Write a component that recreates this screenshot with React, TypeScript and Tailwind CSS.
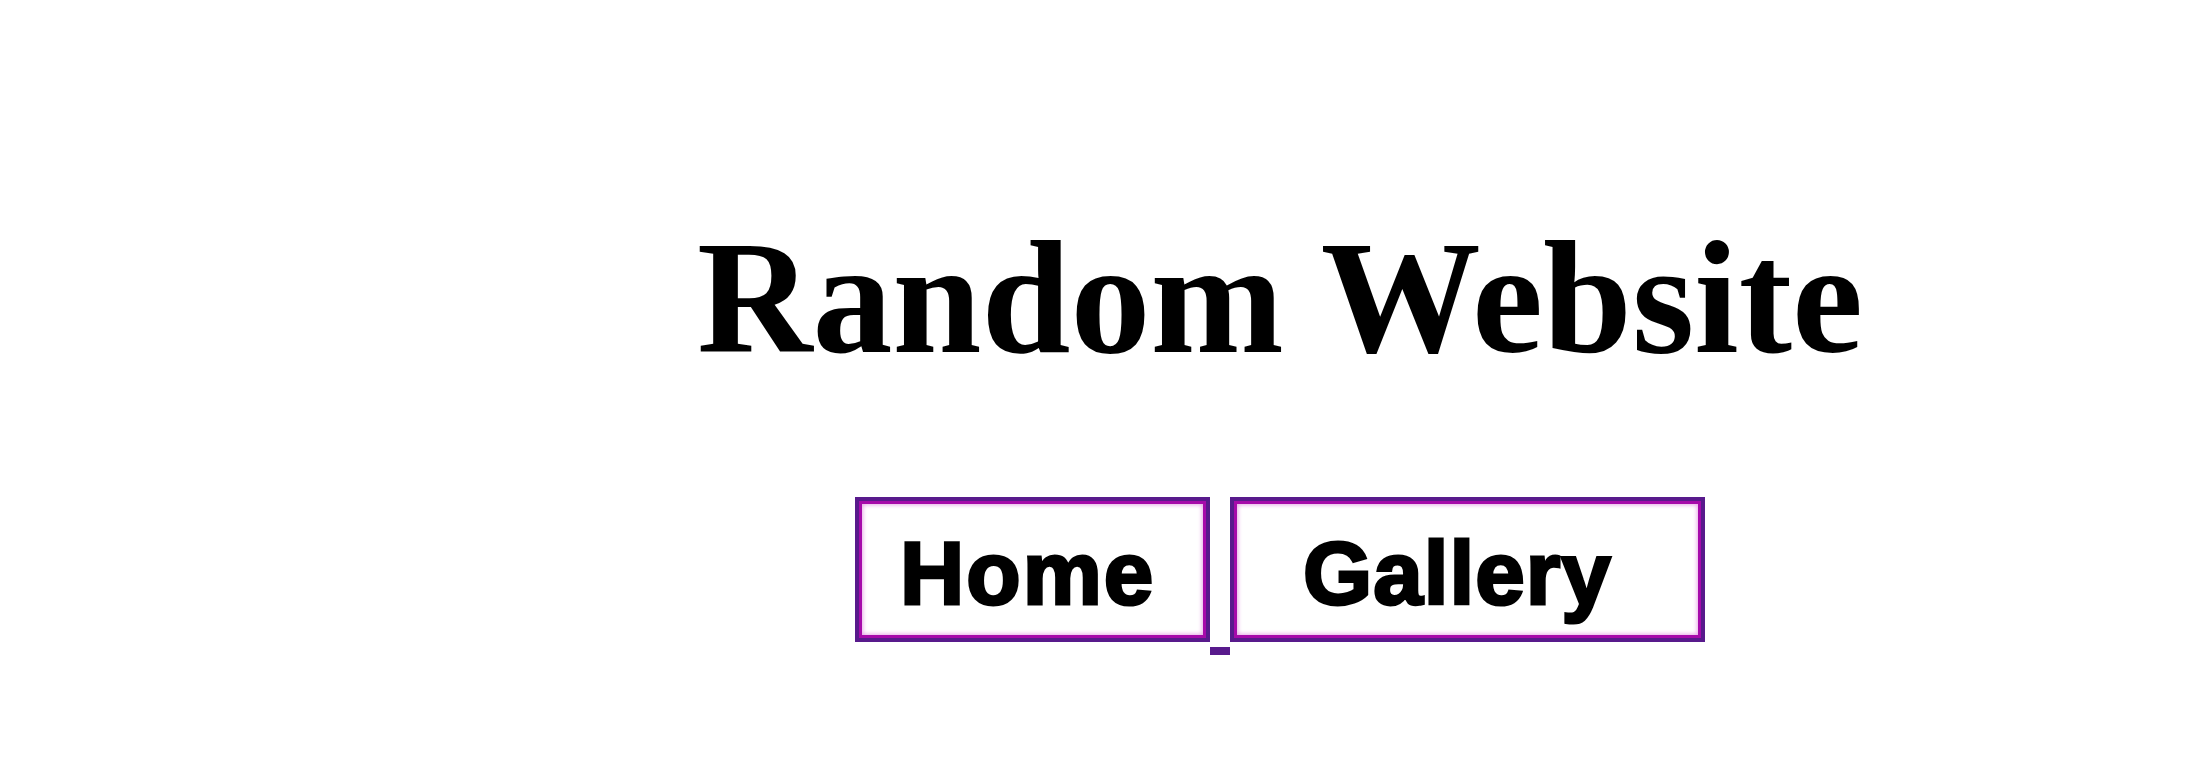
export default function App() {
  return (
    <div className="w-[2208px] h-[764px] bg-white pl-[352px] overflow-hidden">
      <div className="flex flex-col items-center">
        <h1
          className="mt-[218px] h-[160px] leading-[160px] text-[160px] font-bold text-black whitespace-nowrap"
          style={{ fontFamily: '"Liberation Serif", "Times New Roman", serif' }}
        >
          Random Website
        </h1>
        <div className="mt-[119px] flex items-start">
          <a className="block w-[355px] h-[145px] border-4 border-[#581a8c]">
            <div className="w-full h-full border-[3px] border-[#a60aaa] bg-white shadow-[inset_0_0_4px_1px_#e6a6e6]">
              <div
                className="pt-[25px] pl-[38px] text-[89px] leading-none font-bold text-black tracking-[2px] [-webkit-text-stroke:3px_black] blur-[0.6px] whitespace-nowrap"
                style={{ fontFamily: '"Liberation Sans", Arial, sans-serif' }}
              >
                Home
              </div>
            </div>
          </a>
          <span className="block w-[20px] h-[8px] mt-[150px] bg-[#581a8c]" />
          <a className="block w-[475px] h-[145px] border-4 border-[#581a8c]">
            <div className="w-full h-full border-[3px] border-[#a60aaa] bg-white shadow-[inset_0_0_4px_1px_#e6a6e6]">
              <div
                className="pt-[25px] pl-[66px] text-[89px] leading-none font-bold text-black tracking-[1px] [-webkit-text-stroke:3px_black] blur-[0.6px] whitespace-nowrap"
                style={{ fontFamily: '"Liberation Sans", Arial, sans-serif' }}
              >
                Gallery
              </div>
            </div>
          </a>
        </div>
      </div>
    </div>
  );
}
